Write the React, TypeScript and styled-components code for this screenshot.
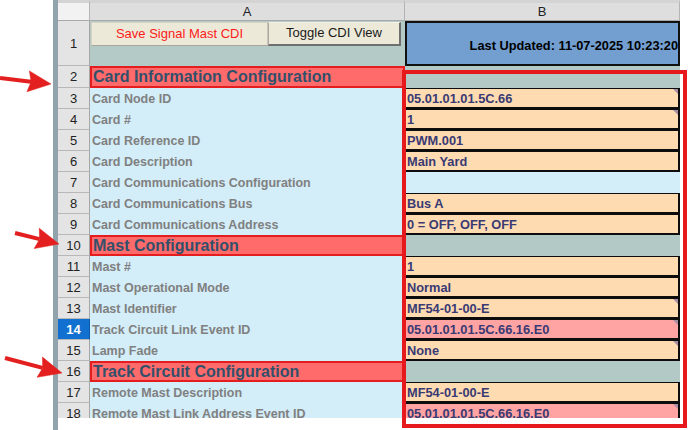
import React from "react";
import styled, { createGlobalStyle } from "styled-components";

const GlobalStyle = createGlobalStyle`
  html, body {
    margin: 0;
    padding: 0;
    background: #fff;
  }
  body {
    font-family: "Liberation Sans", Arial, sans-serif;
  }
`;

const Screen = styled.div`
  position: relative;
  width: 688px;
  height: 430px;
  overflow: hidden;
  display: flex;
  background: #fff;
`;

const Gutter = styled.div`
  width: 53px;
  flex: none;
`;

const FrameEdge = styled.div`
  width: 5px;
  flex: none;
  background: #91a4ae;
`;

const Sheet = styled.div`
  flex: none;
  width: 622px;
  height: 418px;
  overflow: hidden;
  display: grid;
  grid-template-columns: 32px 315px 275px;
  grid-template-rows: 21px 45px 22px repeat(16, 21px);
  align-content: start;
  font-family: "Liberation Sans", Arial, sans-serif;
`;

const ColHead = styled.div<{ $corner?: boolean }>`
  box-sizing: border-box;
  border-top: 3px solid #d4d4d4;
  border-right: 1px solid #b4b4b4;
  border-bottom: 1px solid #a9a9a9;
  background: ${(p) => (p.$corner ? "#f2f2f2" : "#dedede")};
  display: flex;
  align-items: center;
  justify-content: center;
  font-size: 13px;
  color: #222;
`;

const RowHead = styled.div<{ $selected?: boolean }>`
  box-sizing: border-box;
  border-right: 1px solid ${(p) => (p.$selected ? "#0a5aa8" : "#a6a6a6")};
  border-bottom: 1px solid #b8b8b8;
  background: ${(p) => (p.$selected ? "#1170d0" : "#e4e4e4")};
  color: ${(p) => (p.$selected ? "#fff" : "#222")};
  font-weight: ${(p) => (p.$selected ? "bold" : "normal")};
  font-size: 13px;
  display: flex;
  align-items: center;
  justify-content: center;
`;

const ButtonCell = styled.div`
  background: #b4cac6;
  display: flex;
  align-items: flex-start;
  padding: 1px 0 0 1px;
`;

const SheetButton = styled.button<{ $tone: "save" | "toggle"; $w: number }>`
  box-sizing: border-box;
  width: ${(p) => p.$w}px;
  height: 24px;
  padding: 0 0 2px;
  margin: 0;
  background: #ece9d8;
  font-family: "Liberation Sans", Arial, sans-serif;
  font-size: 13px;
  color: ${(p) => (p.$tone === "save" ? "#ff1a1a" : "#1a1a1a")};
  border-style: solid;
  border-color: ${(p) =>
    p.$tone === "save"
      ? "#d6d3c4 #c9c6b6 #a9a69a #d6d3c4"
      : "#f4f2e8 #6f6f6f #6f6f6f #a9a9a9"};
  border-width: ${(p) => (p.$tone === "save" ? "1px" : "1px 2px 2px 1px")};
  cursor: default;
`;

const StampCell = styled.div`
  box-sizing: border-box;
  background: #729fd0;
  border: 2px solid #111;
  display: flex;
  align-items: center;
  justify-content: flex-end;
  padding-top: 3px;
  overflow: hidden;
  white-space: nowrap;
  font-weight: bold;
  font-size: 12.8px;
  color: #000;
`;

const SectionCell = styled.div`
  box-sizing: border-box;
  background: #ff6a6a;
  border: 2px solid #e41e1e;
  padding-left: 1px;
  display: flex;
  align-items: center;
  white-space: nowrap;
  overflow: hidden;
  font-weight: bold;
  font-size: 16px;
  color: #33506b;
`;

const SectionFill = styled.div`
  background: #b3c9c6;
`;

const LabelCell = styled.div`
  background: #d3edf9;
  padding-left: 2px;
  display: flex;
  align-items: center;
  white-space: nowrap;
  overflow: hidden;
  font-weight: bold;
  font-size: 12.5px;
  color: #808080;
`;

const fills = {
  peach: "#ffdbb2",
  pink: "#ffa3a3",
  blank: "#d3edf9",
};

const ValueCell = styled.div<{ $fill: keyof typeof fills }>`
  position: relative;
  box-sizing: border-box;
  background: ${(p) => fills[p.$fill]};
  border: ${(p) => (p.$fill === "blank" ? "none" : "1px solid #0d0d0d")};
  border-right-width: ${(p) => (p.$fill === "blank" ? "0" : "2px")};
  border-bottom-width: ${(p) => (p.$fill === "blank" ? "0" : "2px")};
  padding-left: 1px;
  display: flex;
  align-items: center;
  white-space: nowrap;
  overflow: hidden;
  font-weight: bold;
  font-size: 12.8px;
  color: #393a73;
`;

const CommentMark = styled.span`
  position: absolute;
  top: 0;
  right: 0;
  width: 0;
  height: 0;
  border-top: 5px solid #a88ea2;
  border-left: 5px solid transparent;
`;

const Highlight = styled.div`
  position: absolute;
  left: 402px;
  top: 70px;
  width: 285px;
  height: 358px;
  box-sizing: border-box;
  border: 4px solid #e61a1d;
  pointer-events: none;
`;

const ArrowLayer = styled.svg`
  position: absolute;
  left: 0;
  top: 0;
  pointer-events: none;
`;

type Row =
  | { kind: "section"; n: number; title: string }
  | {
      kind: "field";
      n: number;
      label: string;
      value: string;
      fill: keyof typeof fills;
      note?: boolean;
      selected?: boolean;
    };

const rows: Row[] = [
  { kind: "section", n: 2, title: "Card Information Configuration" },
  { kind: "field", n: 3, label: "Card Node ID", value: "05.01.01.01.5C.66", fill: "peach", note: true },
  { kind: "field", n: 4, label: "Card #", value: "1", fill: "peach", note: true },
  { kind: "field", n: 5, label: "Card Reference ID", value: "PWM.001", fill: "peach" },
  { kind: "field", n: 6, label: "Card Description", value: "Main Yard", fill: "peach" },
  { kind: "field", n: 7, label: "Card Communications Configuration", value: "", fill: "blank" },
  { kind: "field", n: 8, label: "Card Communications Bus", value: "Bus A", fill: "peach" },
  { kind: "field", n: 9, label: "Card Communications Address", value: "0 = OFF, OFF, OFF", fill: "peach" },
  { kind: "section", n: 10, title: "Mast Configuration" },
  { kind: "field", n: 11, label: "Mast #", value: "1", fill: "peach" },
  { kind: "field", n: 12, label: "Mast Operational Mode", value: "Normal", fill: "peach" },
  { kind: "field", n: 13, label: "Mast Identifier", value: "MF54-01-00-E", fill: "peach", note: true },
  {
    kind: "field",
    n: 14,
    label: "Track Circuit Link Event ID",
    value: "05.01.01.01.5C.66.16.E0",
    fill: "pink",
    note: true,
    selected: true,
  },
  { kind: "field", n: 15, label: "Lamp Fade", value: "None", fill: "peach", note: true },
  { kind: "section", n: 16, title: "Track Circuit Configuration" },
  { kind: "field", n: 17, label: "Remote Mast Description", value: "MF54-01-00-E", fill: "peach" },
  {
    kind: "field",
    n: 18,
    label: "Remote Mast Link Address Event ID",
    value: "05.01.01.01.5C.66.16.E0",
    fill: "pink",
    note: true,
  },
];

// annotation arrows: tail -> tip, in page pixels
const arrows: [number, number, number, number][] = [
  [0, 78, 51, 84],
  [15, 233, 59, 244],
  [5, 358, 62, 373],
];

function Arrow({ x1, y1, x2, y2 }: { x1: number; y1: number; x2: number; y2: number }) {
  const len = Math.hypot(x2 - x1, y2 - y1);
  const ux = (x2 - x1) / len;
  const uy = (y2 - y1) / len;
  const head = 23;
  const half = 10.5;
  const bx = x2 - ux * head;
  const by = y2 - uy * head;
  const nx = bx + ux * 3;
  const ny = by + uy * 3;
  const pts = [
    [x2, y2],
    [bx - uy * half, by + ux * half],
    [nx, ny],
    [bx + uy * half, by - ux * half],
  ]
    .map((p) => p.join(","))
    .join(" ");
  return (
    <g fill="#e3201f" stroke="#e3201f">
      <line x1={x1} y1={y1} x2={nx} y2={ny} strokeWidth={4} />
      <polygon points={pts} strokeWidth={0.5} strokeLinejoin="round" />
    </g>
  );
}

export default function App() {
  return (
    <>
      <GlobalStyle />
      <Screen>
        <Gutter />
        <FrameEdge />
        <Sheet>
          <ColHead $corner />
          <ColHead>A</ColHead>
          <ColHead>B</ColHead>

          <RowHead>1</RowHead>
          <ButtonCell>
            <SheetButton $tone="save" $w={177}>
              Save Signal Mast CDI
            </SheetButton>
            <SheetButton $tone="toggle" $w={133}>
              Toggle CDI View
            </SheetButton>
          </ButtonCell>
          <StampCell>Last Updated: 11-07-2025 10:23:20</StampCell>

          {rows.map((r) =>
            r.kind === "section" ? (
              <React.Fragment key={r.n}>
                <RowHead>{r.n}</RowHead>
                <SectionCell>{r.title}</SectionCell>
                <SectionFill />
              </React.Fragment>
            ) : (
              <React.Fragment key={r.n}>
                <RowHead $selected={r.selected}>{r.n}</RowHead>
                <LabelCell>{r.label}</LabelCell>
                <ValueCell $fill={r.fill}>
                  {r.value}
                  {r.note && <CommentMark />}
                </ValueCell>
              </React.Fragment>
            )
          )}
        </Sheet>

        <Highlight />
        <ArrowLayer width={80} height={430} viewBox="0 0 80 430">
          {arrows.map(([x1, y1, x2, y2], i) => (
            <Arrow key={i} x1={x1} y1={y1} x2={x2} y2={y2} />
          ))}
        </ArrowLayer>
      </Screen>
    </>
  );
}
